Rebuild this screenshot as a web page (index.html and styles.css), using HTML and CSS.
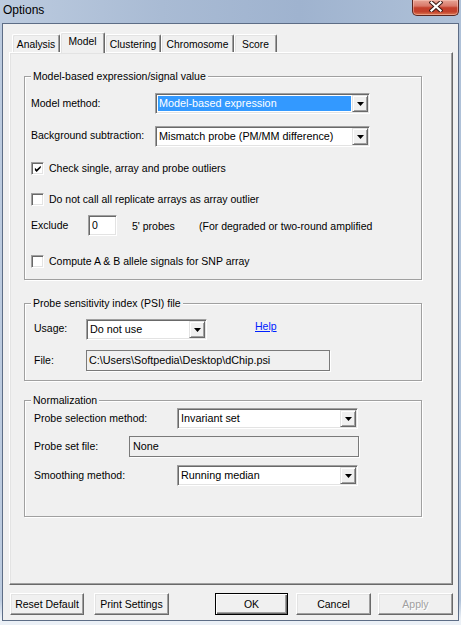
FILE: index.html
```html
<!DOCTYPE html>
<html lang="en">
<head>
<meta charset="utf-8">
<title>Options</title>
<link rel="stylesheet" href="styles.css">
</head>
<body>
<div class="window">
  <div class="titlebar">
    <span class="title">Options</span>
    <div class="close">
      <svg width="14" height="11" viewBox="0 0 14 11">
        <path d="M2.5 1.5 L11.5 9.5 M11.5 1.5 L2.5 9.5" stroke="#3b1a16" stroke-width="4.2" stroke-linecap="square" fill="none"/>
        <path d="M2.5 1.5 L11.5 9.5 M11.5 1.5 L2.5 9.5" stroke="#ffffff" stroke-width="2.2" stroke-linecap="square" fill="none"/>
      </svg>
    </div>
  </div>
  <div class="client">
    <div class="tabs">
      <div class="tab t1">Analysis</div>
      <div class="tab t2 active">Model</div>
      <div class="tab t3">Clustering</div>
      <div class="tab t4">Chromosome</div>
      <div class="tab t5">Score</div>
    </div>
    <div class="panel">
      <div class="group g1">
        <div class="legend">Model-based expression/signal value</div>
        <div class="row r1">
          <span class="label w124">Model method:</span>
          <div class="combo w215"><span class="value selected">Model-based expression</span><span class="drop"><svg width="7" height="4" viewBox="0 0 7 4"><path d="M0 0H7L3.5 4Z"/></svg></span></div>
        </div>
        <div class="row r2">
          <span class="label w124">Background subtraction:</span>
          <div class="combo w215"><span class="value">Mismatch probe (PM/MM difference)</span><span class="drop"><svg width="7" height="4" viewBox="0 0 7 4"><path d="M0 0H7L3.5 4Z"/></svg></span></div>
        </div>
        <div class="check c1">
          <span class="cb"><svg width="9" height="9" viewBox="0 0 9 9"><path d="M1 3.2 L3 5.2 L7.6 0.8 L7.6 3.2 L3 7.8 L1 5.8Z"/></svg></span>
          <span>Check single, array and probe outliers</span>
        </div>
        <div class="check c2">
          <span class="cb"></span>
          <span>Do not call all replicate arrays as array outlier</span>
        </div>
        <div class="row r3">
          <span class="label w57">Exclude</span>
          <div class="edit w29">0</div>
          <span class="probes">5' probes</span>
          <span>(For degraded or two-round amplified</span>
        </div>
        <div class="check c3">
          <span class="cb"></span>
          <span>Compute A &amp; B allele signals for SNP array</span>
        </div>
      </div>

      <div class="group g2">
        <div class="legend">Probe sensitivity index (PSI) file</div>
        <div class="row r4">
          <span class="label w52">Usage:</span>
          <div class="combo w121"><span class="value">Do not use</span><span class="drop"><svg width="7" height="4" viewBox="0 0 7 4"><path d="M0 0H7L3.5 4Z"/></svg></span></div>
          <a class="help" href="#">Help</a>
        </div>
        <div class="row r5">
          <span class="label w52">File:</span>
          <div class="readonly w244">C:\Users\Softpedia\Desktop\dChip.psi</div>
        </div>
      </div>

      <div class="group g3">
        <div class="legend">Normalization</div>
        <div class="row r6">
          <span class="label w143">Probe selection method:</span>
          <div class="combo w181"><span class="value">Invariant set</span><span class="drop"><svg width="7" height="4" viewBox="0 0 7 4"><path d="M0 0H7L3.5 4Z"/></svg></span></div>
        </div>
        <div class="row r7">
          <span class="label w95">Probe set file:</span>
          <div class="readonly w230 ro-none">None</div>
        </div>
        <div class="row r8">
          <span class="label w143">Smoothing method:</span>
          <div class="combo w181"><span class="value">Running median</span><span class="drop"><svg width="7" height="4" viewBox="0 0 7 4"><path d="M0 0H7L3.5 4Z"/></svg></span></div>
        </div>
      </div>
    </div>
    <div class="buttons">
      <div class="btn b-reset">Reset Default</div>
      <div class="btn b-print">Print Settings</div>
      <div class="btn b-ok default">OK</div>
      <div class="btn b-cancel">Cancel</div>
      <div class="btn b-apply disabled">Apply</div>
    </div>
  </div>
</div>
</body>
</html>
```

FILE: styles.css
```css
* { box-sizing: border-box; }
html, body { margin: 0; padding: 0; }
body {
  width: 461px;
  height: 625px;
  overflow: hidden;
  font-family: "Liberation Sans", Arial, sans-serif;
  font-size: 10.5px;
  color: #000;
  background: #dfe6ef;
}
.window {
  width: 461px;
  height: 625px;
  display: flex;
  flex-direction: column;
  background:
    linear-gradient(180deg, rgba(255,255,255,0) 96%, rgba(235,240,246,1) 99%),
    linear-gradient(90deg, #bccbdf 0%, #a9bbd4 35%, #9fb3cf 65%, #afc1d8 100%);
}
.titlebar {
  height: 23px;
  flex: none;
  display: flex;
  justify-content: space-between;
  align-items: flex-start;
  padding-left: 3px;
  padding-right: 2px;
}
.title {
  font-size: 12px;
  line-height: 20px;
  color: #000;
}
.close {
  width: 47px;
  height: 16px;
  border: 1px solid #5a2620;
  border-top: none;
  border-radius: 0 0 5px 5px;
  background: linear-gradient(180deg, #e7a596 0%, #d9796a 40%, #c4402c 52%, #c3412b 78%, #dc7b55 100%);
  box-shadow: inset 0 0 0 1px rgba(255, 210, 200, 0.45);
  display: flex;
  justify-content: center;
  align-items: flex-start;
  padding-top: 1px;
}
.close svg { display: block; }

.client {
  margin-left: 2px;
  width: 457px;
  height: 598px;
  flex: none;
  border: 1px solid #5d6d86;
  background: #f0f0f0;
  display: flex;
  flex-direction: column;
}

/* tabs */
.tabs {
  display: flex;
  align-items: flex-end;
  height: 20px;
  margin-top: 8px;
  padding-left: 9px;
  position: relative;
  z-index: 1;
  flex: none;
}
.tab {
  height: 18px;
  padding-top: 3px;
  line-height: 14px;
  font-size: 10.3px;
  text-align: center;
  background: #f0f0f0;
  border-top: 1px solid #fff;
  border-left: 1px solid #fff;
  border-right: 1px solid #696969;
  box-shadow: inset -1px 0 0 #a0a0a0, inset 1px 1px 0 #e3e3e3;
  border-radius: 2px 2px 0 0;
  white-space: nowrap;
}
.tab.active {
  height: 21px;
  padding-top: 2px;
  margin-bottom: -1px;
}
.t1 { width: 48px; }
.t2 { width: 45px; }
.t3 { width: 56px; }
.t4 { width: 73px; }
.t5 { width: 43px; }

/* panel */
.panel {
  margin-left: 6px;
  width: 444px;
  height: 533px;
  flex: none;
  border: 1px solid;
  border-color: #fff #696969 #696969 #fff;
  box-shadow: inset -1px -1px 0 #a0a0a0, inset 1px 1px 0 #e3e3e3;
  padding: 0 0 0 14px;
}

/* group boxes */
.group {
  width: 398px;
  border: 1px solid #a0a0a0;
  box-shadow: 1px 1px 0 #fff, inset 1px 1px 0 #fff;
}
.legend {
  display: table;
  margin-top: -8px;
  padding: 0 2px;
  line-height: 14px;
  background: #f0f0f0;
  white-space: nowrap;
}
.g1 { margin-top: 23px; padding: 0 0 11px 6px; }
.g2 { margin-top: 23px; padding: 0 0 9px 9px; }
.g3 { margin-top: 19px; padding: 0 0 30px 9px; }
.g2 .legend, .g3 .legend { margin-left: -3px; }
.g1 .legend { margin-left: 0; }

.row {
  display: flex;
  align-items: center;
  height: 21px;
  white-space: nowrap;
}
.label { flex: none; line-height: 13px; }
.w124 { width: 124px; }
.w57 { width: 57px; }
.w52 { width: 52px; }
.w143 { width: 143px; }
.w95 { width: 95px; }

.r1 { margin-top: 10px; }
.r2 { margin-top: 12px; }
.r2 .label { margin-top: -3px; }
.r3 { margin-top: 9px; }
.r4 { margin-top: 9px; }
.r4 .label { margin-top: -2px; }
.r5 { margin-top: 10px; }
.r6 { margin-top: 1px; }
.r7 { margin-top: 7px; }
.r8 { margin-top: 8px; }

/* combo box */
.combo {
  flex: none;
  height: 21px;
  display: flex;
  border: 1px solid;
  border-color: #a0a0a0 #fff #fff #a0a0a0;
  box-shadow: inset 1px 1px 0 #696969, inset -1px -1px 0 #e3e3e3;
  padding: 1px;
  background: #fff;
}
.w215 { width: 215px; }
.w121 { width: 121px; }
.w181 { width: 181px; }
.combo .value {
  flex: 1;
  min-width: 0;
  overflow: hidden;
  line-height: 17px;
  padding-left: 2px;
  background: #fff;
  font-size: 10.8px;
}
.combo .value.selected {
  margin: 1px 1px 1px 1px;
  line-height: 15px;
  padding-left: 1px;
  background: #3399ff;
  color: #fff;
}
.drop {
  flex: none;
  width: 16px;
  height: 17px;
  background: #f0f0f0;
  border: 1px solid;
  border-color: #e3e3e3 #696969 #696969 #e3e3e3;
  box-shadow: inset 1px 1px 0 #fff, inset -1px -1px 0 #a0a0a0;
  display: flex;
  align-items: center;
  justify-content: center;
}
.drop svg { display: block; fill: #000; }

/* edit boxes */
.edit {
  flex: none;
  height: 21px;
  border: 1px solid;
  border-color: #a0a0a0 #fff #fff #a0a0a0;
  box-shadow: inset 1px 1px 0 #696969, inset -1px -1px 0 #e3e3e3;
  background: #fff;
  line-height: 19px;
  padding-left: 3px;
}
.w29 { width: 29px; }
.probes {
  margin-left: 15px;
  width: 67px;
  flex: none;
}
.readonly {
  flex: none;
  height: 21px;
  border: 1px solid #7a7a7a;
  box-shadow: 1px 1px 0 #fff;
  background: #f0f0f0;
  line-height: 19px;
  padding-left: 2px;
  font-size: 10.8px;
}
.ro-none { padding-left: 3px; }
.w244 { width: 244px; }
.w230 { width: 230px; }

.help {
  margin-left: 48px;
  margin-top: -6px;
  color: #0020ff;
  text-decoration: underline;
  line-height: 13px;
}

/* checkboxes */
.check {
  display: flex;
  align-items: center;
  gap: 5px;
  height: 13px;
  line-height: 13px;
  white-space: nowrap;
}
.cb {
  flex: none;
  width: 13px;
  height: 13px;
  border: 1px solid;
  border-color: #a0a0a0 #fff #fff #a0a0a0;
  box-shadow: inset 1px 1px 0 #696969, inset -1px -1px 0 #e3e3e3;
  background: #fff;
  padding: 1px;
}
.cb svg { display: block; margin: 1px 0 0 1px; fill: #000; width: 8px; height: 8px; }
.c1 { margin-top: 15px; }
.c2 { margin-top: 18px; }
.c3 { margin-top: 19px; }

/* buttons */
.buttons {
  display: flex;
  margin-top: 8px;
  padding-left: 7px;
  height: 22px;
  flex: none;
}
.btn {
  flex: none;
  height: 22px;
  line-height: 20px;
  text-align: center;
  white-space: nowrap;
  background: #f0f0f0;
  border: 1px solid;
  border-color: #fff #696969 #696969 #fff;
  box-shadow: inset -1px -1px 0 #a0a0a0, inset 1px 1px 0 #e3e3e3;
}
.btn.default {
  border: 1px solid #000;
  box-shadow: inset 1px 1px 0 #fff, inset -1px -1px 0 #696969, inset -2px -2px 0 #a0a0a0;
}
.btn.disabled {
  color: #a0a0a0;
  text-shadow: 1px 1px 0 #fff;
}
.b-reset { width: 74px; }
.b-print { width: 75px; margin-left: 10px; }
.b-ok { width: 73px; margin-left: 46px; }
.b-cancel { width: 75px; margin-left: 8px; }
.b-apply { width: 75px; margin-left: 7px; }
```
